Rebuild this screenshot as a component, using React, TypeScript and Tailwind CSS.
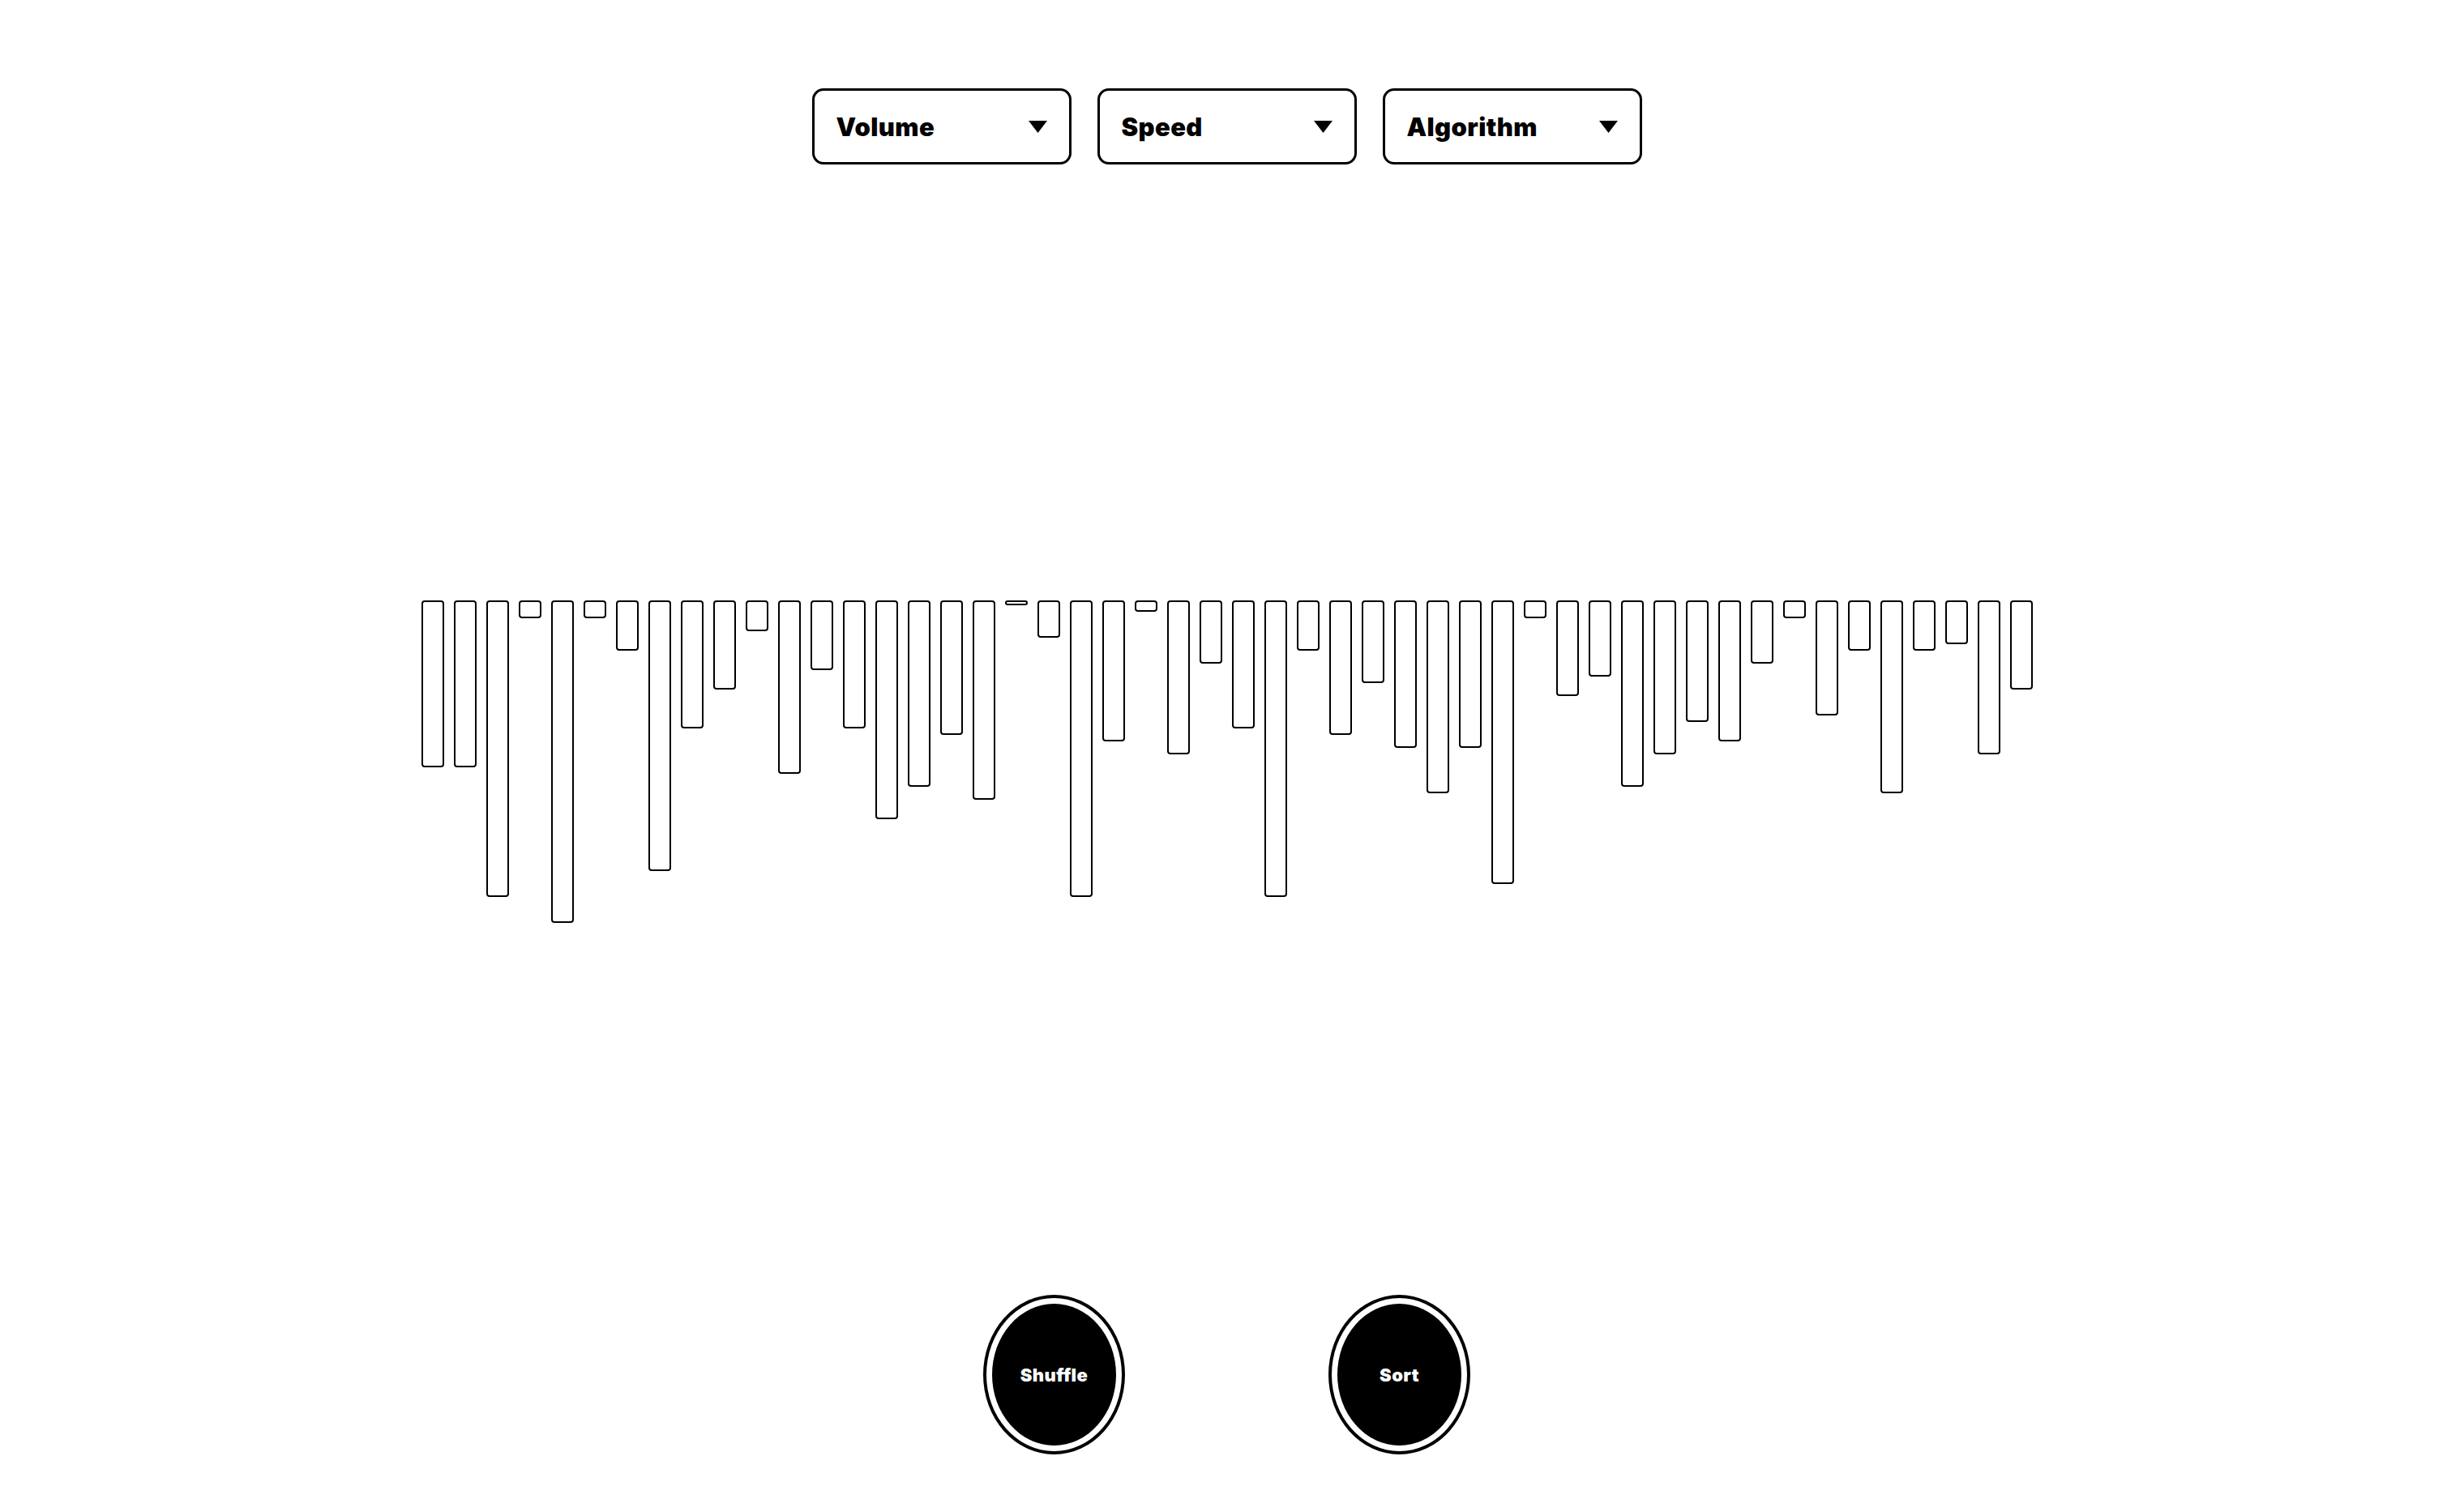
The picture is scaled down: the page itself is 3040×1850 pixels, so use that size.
import { useState } from 'react';

const initialBars = [
  25, 25, 45, 2, 49, 2, 7, 41, 19, 13,
  4, 26, 10, 19, 33, 28, 20, 30, 0, 5,
  45, 21, 1, 23, 9, 19, 45, 7, 20, 12,
  22, 29, 22, 43, 2, 14, 11, 28, 23, 18,
  21, 9, 2, 17, 7, 29, 7, 6, 23, 13,
];

const menus = ['Volume', 'Speed', 'Algorithm'];

function Caret() {
  return (
    <svg width="23" height="15" viewBox="0 0 23 15" className="shrink-0">
      <path d="M0 0 H23 L11.5 15 Z" fill="#000" />
    </svg>
  );
}

function Dropdown({ label }: { label: string }) {
  return (
    <button className="w-[320px] h-[94px] flex items-center justify-between px-[27px] border-[3px] border-black rounded-[14px] bg-white text-black">
      <span className="text-[31px] font-black tracking-[0.4px] leading-none">{label}</span>
      <Caret />
    </button>
  );
}

function RoundButton({ label, onClick }: { label: string; onClick: () => void }) {
  return (
    <button
      onClick={onClick}
      className="w-[175px] h-[197px] rounded-[50%] border-4 border-black p-[7px] bg-white"
    >
      <div className="w-full h-full rounded-[50%] bg-black flex items-center justify-center">
        <span className="text-white text-[22px] font-black tracking-[0.4px] leading-none">{label}</span>
      </div>
    </button>
  );
}

export default function App() {
  const [bars, setBars] = useState<number[]>(initialBars);

  function shuffle() {
    const next = [...bars];
    for (let i = next.length - 1; i > 0; i--) {
      const j = Math.floor(Math.random() * (i + 1));
      [next[i], next[j]] = [next[j], next[i]];
    }
    setBars(next);
  }

  function sort() {
    setBars([...bars].sort((a, b) => a - b));
  }

  return (
    <div
      className="min-h-screen bg-white pr-[13px] flex flex-col items-center"
      style={{ fontFamily: 'Inter, "Noto Sans", sans-serif' }}
    >
      {/* Controls */}
      <div className="mt-[109px] flex gap-8">
        {menus.map((m) => (
          <Dropdown key={m} label={m} />
        ))}
      </div>

      {/* Bars */}
      <div className="mt-[538px] h-[410px] flex items-start gap-3">
        {bars.map((v, i) => (
          <div
            key={i}
            className="w-[28px] border-2 border-black rounded-[4px] bg-white"
            style={{ height: v * 8 + 6 }}
          />
        ))}
      </div>

      {/* Actions */}
      <div className="mt-[447px] flex gap-[251px]">
        <RoundButton label="Shuffle" onClick={shuffle} />
        <RoundButton label="Sort" onClick={sort} />
      </div>
    </div>
  );
}
